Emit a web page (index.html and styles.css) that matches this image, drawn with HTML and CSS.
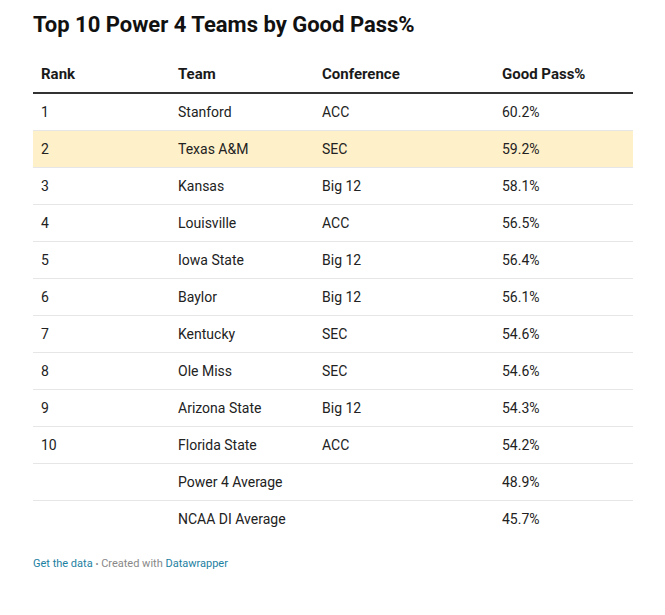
FILE: index.html
```html
<!DOCTYPE html>
<html>
<head>
<meta charset="utf-8">
<link rel="stylesheet" href="styles.css">
</head>
<body>
<div class="chart">
  <h1 class="title">Top 10 Power 4 Teams by Good Pass%</h1>
  <table class="tbl">
    <colgroup>
      <col class="c1"><col class="c2"><col class="c3"><col class="c4">
    </colgroup>
    <thead>
      <tr><th>Rank</th><th>Team</th><th>Conference</th><th>Good Pass%</th></tr>
    </thead>
    <tbody>
      <tr><td>1</td><td>Stanford</td><td>ACC</td><td>60.2%</td></tr>
      <tr class="hl"><td>2</td><td>Texas A&amp;M</td><td>SEC</td><td>59.2%</td></tr>
      <tr><td>3</td><td>Kansas</td><td>Big 12</td><td>58.1%</td></tr>
      <tr><td>4</td><td>Louisville</td><td>ACC</td><td>56.5%</td></tr>
      <tr><td>5</td><td>Iowa State</td><td>Big 12</td><td>56.4%</td></tr>
      <tr><td>6</td><td>Baylor</td><td>Big 12</td><td>56.1%</td></tr>
      <tr><td>7</td><td>Kentucky</td><td>SEC</td><td>54.6%</td></tr>
      <tr><td>8</td><td>Ole Miss</td><td>SEC</td><td>54.6%</td></tr>
      <tr><td>9</td><td>Arizona State</td><td>Big 12</td><td>54.3%</td></tr>
      <tr><td>10</td><td>Florida State</td><td>ACC</td><td>54.2%</td></tr>
      <tr><td></td><td>Power 4 Average</td><td></td><td>48.9%</td></tr>
      <tr class="last"><td></td><td>NCAA DI Average</td><td></td><td>45.7%</td></tr>
    </tbody>
  </table>
  <div class="footer"><a class="link">Get the data</a> <span class="sep">•</span> Created with <a class="link">Datawrapper</a></div>
</div>
</body>
</html>
```
FILE: styles.css
```css
html, body {
  margin: 0;
  padding: 0;
  background: #fff;
}
body {
  font-family: Roboto, "Liberation Sans", sans-serif;
  color: #1d1d1d;
}
.chart {
  padding: 12px 32px 0 33px;
  width: 600px;
}
.title {
  margin: 0;
  font-size: 22px;
  line-height: 26px;
  font-weight: 700;
  color: #111;
}
.tbl {
  margin-top: 18px;
  width: 600px;
  border-collapse: collapse;
  table-layout: fixed;
  font-size: 14px;
}
.c1 { width: 137px; }
.c2 { width: 144px; }
.c3 { width: 180px; }
.c4 { width: 139px; }
.tbl th {
  text-align: left;
  font-size: 15px;
  font-weight: 700;
  color: #1a1a1a;
  padding: 8px;
  line-height: 20px;
  border-bottom: 2px solid #333;
}
.tbl td {
  padding: 8px;
  line-height: 20px;
  border-bottom: 1px solid #e6e6e6;
  color: #222;
}
.tbl tr.hl td {
  background: #fef0c9;
}
.tbl tr.last td {
  border-bottom: none;
}
.footer {
  margin-top: 20px;
  font-size: 11px;
  line-height: 14px;
  color: #888;
}
.link {
  color: #1d81a2;
  text-decoration: none;
}
.sep {
  font-size: 9px;
}
```
